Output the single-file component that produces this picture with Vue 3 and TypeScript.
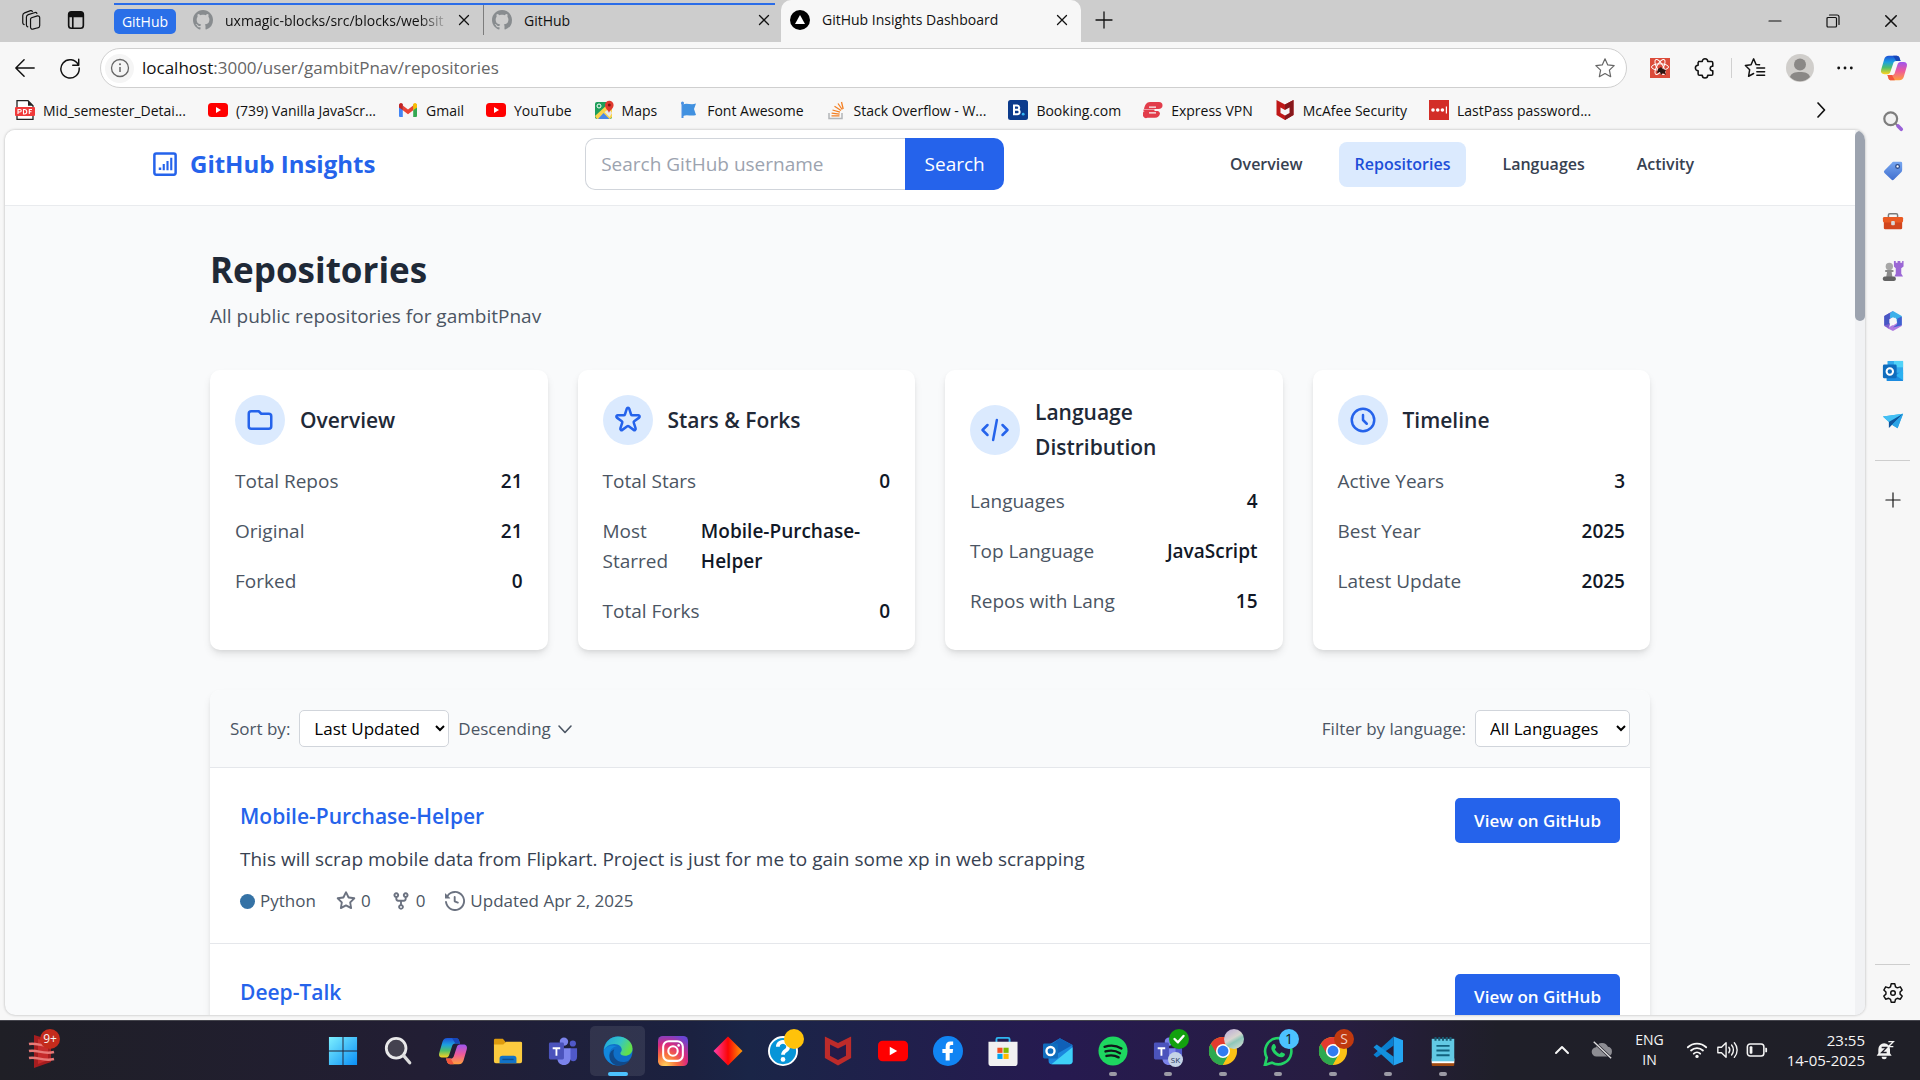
<script setup lang="ts">
import { ref } from 'vue'

interface Icon {
  box: string
  body: string
}

const stroke = (width: number, d: string): string =>
  `<path d="${d}" fill="none" stroke="currentColor" stroke-width="${width}" stroke-linecap="round" stroke-linejoin="round"/>`

const copilotBody = `
  <defs>
    <linearGradient id="cpA" x1="0" y1="0" x2="0" y2="1"><stop offset="0" stop-color="#1d50d8"/><stop offset=".35" stop-color="#1c9fe0"/><stop offset=".65" stop-color="#4fbf6a"/><stop offset="1" stop-color="#ffd21f"/></linearGradient>
    <linearGradient id="cpB" x1="0" y1="0" x2="0" y2="1"><stop offset="0" stop-color="#9c55f0"/><stop offset=".5" stop-color="#ee5a9b"/><stop offset="1" stop-color="#ffa03c"/></linearGradient>
  </defs>
  <path d="M10 2h9c2 0 3 1 3.500 3l1 3h-5c-2 0-3 1-3.500 3l-3 9c-.6 2-1.500 3-3.500 3H5c-3 0-4.500-2-3.700-5l3.500-12C5.600 3.500 7 2 10 2z" fill="url(#cpA)"/>
  <path d="M22 30h-9c-2 0-3-1-3.500-3l-1-3h5c2 0 3-1 3.500-3l3-9c.6-2 1.500-3 3.500-3H27c3 0 4.500 2 3.700 5l-3.500 12c-.8 2.500-2.200 4-5.200 4z" fill="url(#cpB)"/>
  <path d="M15 2h4c2 0 3 1 3.500 3l1 3h-5z" fill="#1746b8"/><path d="M17 30h-4c-2 0-3-1-3.500-3l-1-3h5z" fill="#f2553c"/>`

const chromeBody = `
  <circle cx="16" cy="16" r="15" fill="#fbc116"/>
  <path d="M16 16 3 8.500A15 15 0 0 1 29 8.500H16z" fill="#e33b2e"/>
  <path d="M3 8.500A15 15 0 0 0 15.500 31L22 19.500 16 16z" fill="#2da94f"/>
  <path d="M3 8.500 9.500 19.500 16 16V8.500z" fill="#e33b2e"/><path d="M3 8.500 9.500 19.700 16 23l6-3.500L15.500 31A15 15 0 0 1 3 8.500z" fill="#2da94f"/>
  <circle cx="16" cy="16" r="7.500" fill="#fff"/><circle cx="16" cy="16" r="5.800" fill="#2f7bf0"/>`

const teamsBody = `
  <circle cx="17" cy="6" r="4.500" fill="#7b83eb"/><circle cx="26.500" cy="8" r="3.300" fill="#5059c9"/>
  <path d="M23 13h8v9c0 3-2 5-4 5s-4-2-4-5z" fill="#5059c9"/>
  <path d="M10 13h14v11c0 4-3 7-7 7s-7-3-7-7z" fill="#7b83eb"/>
  <rect x="1" y="7" width="16" height="18" rx="1.500" fill="#4b53bc"/>
  <path d="M5 12h8v2H10v7H8v-7H5z" fill="#fff"/>`

const icons: Record<string, Icon> = {
  workspaces: { box: '0 0 24 24', body: stroke(1.3, 'M12.500 9.500 19 7.500a2 2 0 0 1 2.500 2V18a2.500 2.500 0 0 1-2 2.500L14 22a2 2 0 0 1-2.500-2v-9a2 2 0 0 1 1-1.500zM8.500 19.500A2 2 0 0 1 7 17.500V9a3 3 0 0 1 2-2.800l7.500-2.400a2 2 0 0 1 2 .9M4.500 17A2 2 0 0 1 3 15V7a3 3 0 0 1 2-2.800l6.500-2.400a2 2 0 0 1 2 .7') },
  tabActions: { box: '0 0 24 24', body: '<path d="M4 8V6a3 3 0 0 1 3-3h10a3 3 0 0 1 3 3v2z" fill="currentColor"/>' + stroke(1.8, 'M4 7V6a3 3 0 0 1 3-3h10a3 3 0 0 1 3 3v12a3 3 0 0 1-3 3H7a3 3 0 0 1-3-3zM4 8h16M8.500 8v13') },
  github: { box: '0 0 16 16', body: '<path fill="#888c8f" d="M8 0C3.580 0 0 3.580 0 8c0 3.540 2.290 6.530 5.470 7.590.4.070.55-.17.55-.38 0-.19-.01-.82-.01-1.490-2.010.37-2.530-.49-2.690-.94-.09-.23-.48-.94-.82-1.130-.28-.15-.68-.52-.01-.53.63-.01 1.080.58 1.230.82.72 1.210 1.870.87 2.330.66.07-.52.28-.87.51-1.070-1.780-.2-3.640-.89-3.640-3.950 0-.87.31-1.590.82-2.150-.08-.2-.36-1.020.08-2.120 0 0 .67-.21 2.200.82.64-.18 1.320-.27 2-.27s1.360.09 2 .27c1.530-1.040 2.200-.82 2.200-.82.44 1.100.16 1.920.08 2.120.51.56.82 1.270.82 2.150 0 3.070-1.870 3.750-3.650 3.950.29.25.54.73.54 1.480 0 1.070-.01 1.930-.01 2.200 0 .21.15.46.55.38A8.010 8.010 0 0 0 16 8c0-4.420-3.580-8-8-8z"/>' },
  vercel: { box: '0 0 20 20', body: '<circle cx="10" cy="10" r="10" fill="#000"/><path d="m10 5 5 9H5z" fill="#fff"/>' },
  close: { box: '0 0 12 12', body: stroke(1.3, 'M1.500 1.500l9 9M10.500 1.500l-9 9') },
  plus: { box: '0 0 18 18', body: stroke(1.3, 'M9 1v16M1 9h16') },
  minimize: { box: '0 0 14 14', body: stroke(1.2, 'M1 7h12') },
  restore: { box: '0 0 14 14', body: stroke(1.2, 'M1 4.500a1 1 0 0 1 1-1h7.500a1 1 0 0 1 1 1V12a1 1 0 0 1-1 1H2a1 1 0 0 1-1-1zM3.500 1H11a2 2 0 0 1 2 2v7.500') },
  back: { box: '0 0 24 24', body: stroke(1.6, 'M22 12H3M11 3l-9 9 9 9') },
  reload: { box: '0 0 24 24', body: stroke(1.6, 'M21 8.500A10 10 0 1 0 22 12M21.500 2.500v6.500H15') },
  info: { box: '0 0 20 20', body: '<circle cx="10" cy="10" r="8.500" fill="none" stroke="currentColor" stroke-width="1.300"/><path d="M10 9v5" stroke="currentColor" stroke-width="1.500"/><circle cx="10" cy="6.300" r="1" fill="currentColor"/>' },
  starThin: { box: '0 0 24 24', body: stroke(1.3, 'm12 2 3 6.600 7 .8-5.200 4.900 1.400 7.200L12 18l-6.200 3.500 1.400-7.200L2 9.400l7-.8z') },
  reactExt: { box: '0 0 20 20', body: '<rect width="20" height="20" fill="#dc4b3a"/><g fill="none" stroke="#fff" stroke-width="1"><ellipse cx="10" cy="9" rx="8.500" ry="3.200"/><ellipse cx="10" cy="9" rx="8.500" ry="3.200" transform="rotate(60 10 9)"/><ellipse cx="10" cy="9" rx="8.500" ry="3.200" transform="rotate(120 10 9)"/></g><path d="m8 11 3-2 2 2 3 1-1 2 1 3-3-2-2 2-1-3-3 1z" fill="#2b1512"/>' },
  puzzle: { box: '0 0 24 24', body: stroke(1.7, 'M5 5h4a3 3 0 0 1 6 0h4a1.500 1.500 0 0 1 1.500 1.500V10h-1a2.600 2.600 0 0 0 0 5h1v3.500A1.500 1.500 0 0 1 19 20h-4a3 3 0 0 1-6 0H6a1.500 1.500 0 0 1-1.500-1.500V15a3 3 0 0 1 0-6V6') },
  favorites: { box: '0 0 24 24', body: stroke(1.6, 'M17 8.500 13.200 8.300 10.500 2 7.700 8.500 1.500 9.200l4.700 4.600L5 21l5.500-3M14 12h8.500M14 16h8.500M14 20h8.500') },
  profile: { box: '0 0 28 28', body: '<circle cx="14" cy="14" r="14" fill="#d0cecb"/><circle cx="14" cy="10.500" r="6" fill="#8a8886"/><path d="M4 23c1-4 5-5 10-5s9 1 10 5a14 14 0 0 1-20 0z" fill="#8a8886"/>' },
  dots: { box: '0 0 20 20', body: '<g fill="currentColor"><circle cx="3" cy="10" r="1.600"/><circle cx="10" cy="10" r="1.600"/><circle cx="17" cy="10" r="1.600"/></g>' },
  copilot: { box: '0 0 32 32', body: copilotBody },
  pdf: { box: '0 0 20 20', body: '<path d="M2 .7h11l5 5V19.300H2z" fill="#fff" stroke="#222" stroke-width="1.300"/><path d="M13 .7v5h5" fill="#222"/><rect y="7" width="20" height="9" rx="1" fill="#f03a3a"/><path d="M3 14V9.500h2a1.200 1.200 0 0 1 0 2.500H3M8.500 9.500v4.500h1a2.200 2.200 0 0 0 0-4.500zM17 9.500h-2.700V14M14.300 11.800h2.200" fill="none" stroke="#fff" stroke-width="1.100"/>' },
  youtube: { box: '0 0 20 20', body: '<rect y="3" width="20" height="14" rx="3.500" fill="#f00"/><path d="M8 7v6l5-3z" fill="#fff"/>' },
  gmail: { box: '0 0 20 20', body: '<path d="M1 4.500h3.800V17H2a1 1 0 0 1-1-1z" fill="#4285f4"/><path d="M15.200 4.500H19V16a1 1 0 0 1-1 1h-2.800z" fill="#34a853"/><path d="M4.800 5.500 10 9.500l5.200-4v4.800L10 14.300l-5.200-4z" fill="#ea4335"/><path d="M1 5a2 2 0 0 1 3.200-1.500l.6.500v6.300L1 7.500z" fill="#c5221f"/><path d="M19 5a2 2 0 0 0-3.200-1.500l-.6.5v6.300L19 7.500z" fill="#fbbc04"/>' },
  maps: { box: '0 0 20 20', body: '<rect x="1" y="2" width="17" height="17" rx="2" fill="#1e9e5a"/><path d="M1 16 14 4l4 3v10l-2 2H3z" fill="#fbd34b"/><path d="m4 19 5.500-6 6 6z" fill="#4a86e8"/><path d="m10.500 12 5 5 2.500-4-3-4z" fill="#e8e8e8"/><circle cx="5" cy="6" r="2" fill="none" stroke="#fff" stroke-width="1"/><path d="M15 13c-.5-3-4-4-4-8a4.300 4.300 0 0 1 8.600 0c0 4-4 5-4.600 8z" fill="#e03a2f"/><circle cx="15.300" cy="5" r="1.500" fill="#7d1a14"/>' },
  flag: { box: '0 0 20 20', body: '<path d="M3.500 3v15" stroke="#4a90e2" stroke-width="2"/><circle cx="3.500" cy="3" r="1.500" fill="#4a90e2"/><path d="M4 4.500c4-2 8 1 13-1l-2 5.500 2 6c-5 1.500-9-1-13 1z" fill="#4191e0"/>' },
  stack: { box: '0 0 20 20', body: '<path d="M3 13v5.500h13V13" fill="none" stroke="#b2b5b8" stroke-width="1.500"/><path d="M5.500 15.800h8M5.600 13.200l8 .9M6.500 10l7.500 2.200M8.500 6.300l6.500 4.200M12 3.500l4.200 6M15.500 2l1.700 7" stroke="#f48024" stroke-width="1.300"/>' },
  booking: { box: '0 0 20 20', body: '<rect width="20" height="20" rx="2.500" fill="#0c3b8c"/><path d="M6 5.500v8.800h3.300a2.300 2.300 0 0 0 .7-4.500 2.300 2.300 0 0 0-.8-4.300zM6 9.700h3.500" fill="none" stroke="#fff" stroke-width="2"/><circle cx="15.200" cy="14.200" r="1.400" fill="#35b5f5"/>' },
  express: { box: '0 0 20 20', body: '<path d="M7 2h9a3.500 3.500 0 0 1 3.500 3.500c0 2-1.500 3.500-4 3.500H1c.8-4 2.500-7 6-7z" fill="#e23d4b"/><path d="M.5 9.500h11v1.800H.5z" fill="#e23d4b"/><path d="M2 11h13a3.200 3.200 0 0 1 2 2.500C16.500 16 15 17.800 12 17.800H4.500A3.500 3.500 0 0 1 2 11z" fill="#e23d4b"/><path d="M6 7.200h7M6 12.800h7" stroke="#f7f7f7" stroke-width="1.300"/>' },
  mcafee: { box: '0 0 20 20', body: '<path d="M1.500 0 10 4.500 18.500 0v15L10 20l-8.500-5z" fill="#c01818"/><path d="M10 4.500 18.500 0v15L10 20v-4.500l4.500-2.500V7.500L10 10z" fill="#86181c"/><path d="M5.500 7.500 10 10l4.500-2.500V13L10 15.500 5.500 13z" fill="#f7f7f7"/>' },
  lastpass: { box: '0 0 20 20', body: '<rect width="20" height="20" fill="#d32d27"/><g fill="#fff"><circle cx="4" cy="10" r="1.800"/><circle cx="8.700" cy="10" r="1.800"/><circle cx="13.400" cy="10" r="1.800"/><rect x="16.800" y="6.500" width="1.200" height="7"/></g>' },
  chevronRight: { box: '0 0 20 20', body: stroke(1.7, 'm7 3 6.500 7L7 17') },
  chevronDown: { box: '0 0 20 20', body: stroke(1.6, 'm4 7 6 6.500L16 7') },
  logo: { box: '0 0 24 24', body: '<rect x="3.500" y="3.500" width="17" height="17" rx="1.500" fill="none" stroke="currentColor" stroke-width="2"/><path d="M11 17V12M14 17V9.500M17 17V7" stroke="currentColor" stroke-width="1.700"/><rect x="7" y="14.800" width="2" height="2" fill="currentColor"/>' },
  folder: { box: '0 0 24 24', body: stroke(2, 'M3 7v10a2 2 0 002 2h14a2 2 0 002-2V9a2 2 0 00-2-2h-6l-2-2H5a2 2 0 00-2 2z') },
  star: { box: '0 0 24 24', body: stroke(2, 'M11.049 2.927c.3-.921 1.603-.921 1.902 0l1.519 4.674a1 1 0 00.95.69h4.915c.969 0 1.371 1.240.588 1.810l-3.976 2.888a1 1 0 00-.363 1.118l1.518 4.674c.3.922-.755 1.688-1.538 1.118l-3.976-2.888a1 1 0 00-1.176 0l-3.976 2.888c-.783.57-1.838-.197-1.538-1.118l1.518-4.674a1 1 0 00-.363-1.118l-3.976-2.888c-.784-.57-.38-1.810.588-1.810h4.914a1 1 0 00.951-.69l1.519-4.674z') },
  code: { box: '0 0 24 24', body: stroke(2, 'M10.500 20l3-16m4.500 4l4 4-4 4M6 16l-4-4 4-4') },
  clock: { box: '0 0 24 24', body: stroke(2, 'M12 8v4l3 3m6-3a9 9 0 11-18 0 9 9 0 0118 0z') },
  octStar: { box: '0 0 16 16', body: '<path fill="currentColor" d="M8 .25a.75.75 0 0 1 .673.418l1.882 3.815 4.210.612a.75.75 0 0 1 .416 1.279l-3.046 2.970.719 4.192a.751.751 0 0 1-1.088.791L8 12.347l-3.766 1.980a.75.75 0 0 1-1.088-.79l.72-4.194L.818 6.374a.75.75 0 0 1 .416-1.280l4.210-.611L7.327.668A.75.75 0 0 1 8 .25Zm0 2.445L6.615 5.500a.75.75 0 0 1-.564.41l-3.097.45 2.240 2.184a.75.75 0 0 1 .216.664l-.528 3.084 2.769-1.456a.75.75 0 0 1 .698 0l2.770 1.456-.53-3.084a.75.75 0 0 1 .216-.664l2.240-2.183-3.096-.45a.75.75 0 0 1-.564-.41L8 2.694Z"/>' },
  fork: { box: '0 0 16 16', body: '<path fill="currentColor" d="M5 5.372v.878c0 .414.336.75.75.75h4.500a.75.75 0 0 0 .75-.75v-.878a2.250 2.250 0 1 1 1.500 0v.878a2.250 2.250 0 0 1-2.250 2.250h-1.500v2.128a2.251 2.251 0 1 1-1.500 0V8.500h-1.500A2.250 2.250 0 0 1 3.500 6.250v-.878a2.250 2.250 0 1 1 1.500 0ZM5 3.250a.75.75 0 1 0-1.500 0 .75.75 0 0 0 1.500 0Zm6.750.75a.75.75 0 1 0 0-1.500.75.75 0 0 0 0 1.500Zm-3 8.750a.75.75 0 1 0-1.500 0 .75.75 0 0 0 1.500 0Z"/>' },
  history: { box: '0 0 16 16', body: '<path fill="currentColor" d="m.427 1.927 1.215 1.215a8.002 8.002 0 1 1-1.600 5.685.75.75 0 1 1 1.493-.154 6.500 6.500 0 1 0 1.180-4.458l1.358 1.358A.25.25 0 0 1 3.896 6H.25A.25.25 0 0 1 0 5.750V2.104a.25.25 0 0 1 .427-.177ZM7.750 4a.75.75 0 0 1 .75.75v2.992l2.028.812a.75.75 0 0 1-.557 1.392l-2.500-1A.751.751 0 0 1 7 8.250v-3.500A.75.75 0 0 1 7.750 4Z"/>' },
  sideSearch: { box: '0 0 24 24', body: '<circle cx="9.500" cy="9.500" r="7" fill="#f1f1f1" stroke="#7d7d7d" stroke-width="2.400"/><path d="m15 15 2.500 2.500" stroke="#7d7d7d" stroke-width="2"/><path d="m17.500 17.500 3.500 3.500" stroke="#9a62d8" stroke-width="4" stroke-linecap="round"/>' },
  sideTag: { box: '0 0 24 24', body: '<defs><linearGradient id="tg" x1="0" y1="0" x2="0" y2="1"><stop offset="0" stop-color="#76a6f0"/><stop offset="1" stop-color="#416fcf"/></linearGradient></defs><path d="M13 2h7.500A1.500 1.500 0 0 1 22 3.500V11c0 1-.3 1.600-1 2.300l-8 8a2 2 0 0 1-2.800 0l-7.500-7a2 2 0 0 1 0-2.800l8-8.300C11.400 2.300 12 2 13 2z" fill="url(#tg)"/><circle cx="17" cy="7" r="2" fill="#fff" stroke="#274789" stroke-width="1.400"/>' },
  sideTools: { box: '0 0 24 24', body: '<path d="M7 8V5.500A1.500 1.500 0 0 1 8.500 4h7A1.500 1.500 0 0 1 17 5.500V8" fill="none" stroke="#7a7a7a" stroke-width="1.600"/><rect x="2" y="12" width="20" height="9" rx="1.500" fill="#d2461d"/><rect x="1" y="7.500" width="22" height="6" rx="1.500" fill="#ea5a23"/><rect x="10" y="12" width="4" height="4.500" rx="1" fill="#d8d8d8"/>' },
  sideGames: { box: '0 0 24 24', body: '<path d="M13 1h2v2h2V1h3v2h2V1h1.500v6L21 9v6l2 3h-9.500l1.500-3V9l-2-2z" fill="#9b67d5"/><circle cx="8" cy="7" r="4" fill="#a7a7a7"/><path d="M3.500 11h9v2h-2l1 6h-7l1-6h-2z" fill="#8b8b8b"/><rect x="1" y="18" width="14" height="5" rx="2" fill="#636363"/>' },
  sideOffice: { box: '0 0 24 24', body: '<path d="M12 1 2.500 6.500v11l5 3z" fill="#7f5fd0"/><path d="m12 1 9.500 5.500v10L15 12V8.500L8.500 9 9 3z" fill="#3cb0ea"/><path d="M12 1 8.500 3.200V15l-6 2V6.500z" fill="#4757c4"/><path d="M21.500 8v9.500L12 23l-6-3.200 6-3.800 5-3z" fill="#b07be0"/><path d="m21.500 7-5 2.500v6L12 19l9.500-2.500z" fill="#3c62d0"/><path d="m12 8 4 2v4.500L12 17l-4-2.500V10z" fill="#f7f7f7"/>' },
  sideOutlook: { box: '0 0 24 24', body: '<path d="M6 1h16a1 1 0 0 1 1 1v13H6z" fill="#32a9ec"/><path d="M13 1h10v7H13z" fill="#51d3f8"/><path d="M5 14h18v8a1 1 0 0 1-1 1H6a1 1 0 0 1-1-1z" fill="#1b8be0"/><path d="m23 11-8 6 8 5z" fill="#2bb1f1"/><rect x="1" y="5" width="15" height="15" rx="1.500" fill="#0f6cbd"/><circle cx="8.500" cy="12.500" r="3.500" fill="none" stroke="#fff" stroke-width="2.200"/>' },
  sideDrop: { box: '0 0 24 24', body: '<path d="M1 7 23 4l-6 16-5-3z" fill="#29a7e8"/><path d="M1 7 23 4 7.500 13z" fill="#43c0f4"/><path d="M7.500 13 23 4 11 16l-3.500 3.500z" fill="#0f559c"/><path d="M11 16 23 4l-6 16z" fill="#2ba3e6"/>' },
  gear: { box: '0 0 24 24', body: stroke(1.6, 'M10 2h4l.7 3.200 2 1.200L20 5.300l2 3.500-2.300 2.200v2.200L22 15.300l-2 3.500-3.300-1-2 1.200L14 22h-4l-.7-3-2-1.200-3.300 1-2-3.500 2.300-2.100V11L2 8.800l2-3.500 3.300 1.100 2-1.200z') + '<circle cx="12" cy="12" r="2.500" fill="none" stroke="currentColor" stroke-width="1.600"/>' },
  widget: { box: '0 0 32 40', body: '<path d="M8 5l17 5v22L8 38z" fill="#a51d1f"/><path d="M12 9l10 3v18l-10 4z" fill="#c62b2b"/><path d="M3 14c8-2 14 4 25 1M3 21c8-2 14 4 25 1M3 28c8-2 14 4 25 1" fill="none" stroke="#e87a78" stroke-width="2.500"/>' },
  start: { box: '0 0 32 32', body: '<defs><linearGradient id="st" x1="0" y1="0" x2="1" y2="1"><stop offset="0" stop-color="#7df0ff"/><stop offset="1" stop-color="#0a8ef5"/></linearGradient></defs><path d="M1 1h14.500v14.500H1zM16.500 1H31v14.500H16.500zM1 16.500h14.500V31H1zM16.500 16.500H31V31H16.500z" fill="url(#st)"/>' },
  search: { box: '0 0 32 32', body: '<circle cx="14" cy="13" r="10.500" fill="#44424f" stroke="#e9e9ea" stroke-width="3"/><path d="m22 21 6.500 7.500" stroke="#dcdcdd" stroke-width="3.500" stroke-linecap="round"/>' },
  explorer: { box: '0 0 32 32', body: '<path d="M1 4.500A1.500 1.500 0 0 1 2.500 3h8l3 3.500V10H1z" fill="#dd9b0e"/><path d="M1 9h10l3-3h15.500A1.500 1.500 0 0 1 31 7.500V27a2 2 0 0 1-2 2H3a2 2 0 0 1-2-2z" fill="#fccb3f"/><path d="M7 29v-5a3 3 0 0 1 3-3h12a3 3 0 0 1 3 3v5z" fill="#1273c8"/><path d="M10 25h12" stroke="#0b4f92" stroke-width="1.500"/>' },
  teams: { box: '0 0 32 32', body: teamsBody },
  edge: { box: '0 0 32 32', body: '<defs><linearGradient id="eg" x1="0" y1="0" x2="1" y2=".4"><stop offset="0" stop-color="#1fa3df"/><stop offset=".6" stop-color="#35c6c4"/><stop offset="1" stop-color="#63e04b"/></linearGradient></defs><circle cx="16" cy="16" r="15.500" fill="#0f6fc8"/><path d="M1 15C2 6 8 .5 16 .5c9 0 15.500 6 15.500 13 0 5-4 7.500-8 7.500-3 0-5-1.200-5-2.500s1.500-1.500 1.500-4c0-3-3-6-8-6-5 0-9 3-11 6.500z" fill="url(#eg)"/><path d="M12 14c-3 7 2 15 12 13.500 2-.3 4-1.500 5-2.500-3 5-8 7-13 6.500C9 30.500 6 25 7 20c.6-3 2.500-5 5-6z" fill="#114a8b"/><path d="M1 15c3-5 10-6 14-4-5 .5-8.500 5-8.500 10 0 4 2 8 6 10A15.500 15.500 0 0 1 1 15z" fill="#1287dc"/>' },
  instagram: { box: '0 0 32 32', body: '<defs><radialGradient id="ig" cx=".25" cy="1" r="1.100"><stop offset="0" stop-color="#ffd45c"/><stop offset=".35" stop-color="#f8703d"/><stop offset=".65" stop-color="#dc2a7b"/><stop offset="1" stop-color="#6b45d3"/></radialGradient></defs><rect width="32" height="32" rx="5" fill="url(#ig)"/><rect x="5.500" y="5.500" width="21" height="21" rx="6" fill="none" stroke="#fff" stroke-width="2.200"/><circle cx="16" cy="16" r="5" fill="none" stroke="#fff" stroke-width="2.200"/><circle cx="22" cy="10" r="1.400" fill="#fff"/>' },
  diamond: { box: '0 0 32 32', body: '<defs><linearGradient id="dm"><stop offset="0" stop-color="#ff3fae"/><stop offset=".5" stop-color="#fb0505"/><stop offset="1" stop-color="#ff9c06"/></linearGradient></defs><path d="m16 .5 15.500 15.500L16 31.500.5 16z" fill="url(#dm)"/>' },
  help: { box: '0 0 32 32', body: '<circle cx="16" cy="16" r="15" fill="#0795d8" stroke="#fff" stroke-width="2"/><path d="M10.500 11.500a5.500 5 0 1 1 8.500 4c-2 1.300-3 2-3 4.500" fill="none" stroke="#fff" stroke-width="4"/><circle cx="16" cy="25" r="2.500" fill="#fff"/>' },
  mcafeeFlat: { box: '0 0 32 32', body: '<path d="M2 .5 16 7.500 30 .5v23L16 31.500 2 23.500z" fill="#bd2b2a"/><path d="m7.500 9 8.500 4.300L24.500 9v12L16 25.500 7.500 21z" fill="#241b49"/>' },
  youtubeBig: { box: '0 0 32 32', body: '<rect y="5" width="32" height="22" rx="5" fill="#f00"/><path d="M12.500 11.500v9l8-4.500z" fill="#fff"/>' },
  facebook: { box: '0 0 32 32', body: '<circle cx="16" cy="16" r="16" fill="#1184f3"/><path d="M13.500 26V18H10v-4.200h3.500V11c0-3.500 2-5.200 5-5.200h3v3.800h-2c-1.300 0-1.700.8-1.700 1.800v2.400h3.700l-.6 4.200h-3.100v8z" fill="#fff"/>' },
  store: { box: '0 0 32 32', body: '<path d="M9 7V3.500A1.500 1.500 0 0 1 10.500 2h11A1.500 1.500 0 0 1 23 3.500V7" fill="none" stroke="#2fb6f1" stroke-width="2"/><path d="M.5 6h31v23a3 3 0 0 1-3 3h-25a3 3 0 0 1-3-3z" fill="#f1f1f1"/><path d="M10 12.500h5.500V18H10z" fill="#f25022"/><path d="M16.500 12.500H22V18h-5.500z" fill="#7fba00"/><path d="M10 19h5.500v5.500H10z" fill="#00a4ef"/><path d="M16.500 19H22v5.500h-5.500z" fill="#ffb900"/>' },
  outlook: { box: '0 0 32 32', body: '<path d="M5 10 18 2.500 31.500 9.500V27a3 3 0 0 1-3 3H9a3 3 0 0 1-3-3z" fill="#1b86dd"/><path d="M18 2.500 31.500 9.500 15 19l-6-10z" fill="#1060b8"/><path d="M31.500 12v15a3 3 0 0 1-3 3H9z" fill="#3fd0f7"/><rect y="8" width="16" height="16" rx="1.500" fill="#0f6cbd"/><circle cx="8" cy="16" r="4.300" fill="none" stroke="#fff" stroke-width="2.500"/>' },
  spotify: { box: '0 0 32 32', body: '<circle cx="16" cy="16" r="15.500" fill="#1ed760"/><path d="M7 11.500c6-1.800 13-1.200 18 1.800M8 16.500c5-1.500 11-1 15.500 1.800M9 21.300c4.500-1.200 9-.8 13 1.500" fill="none" stroke="#11181a" stroke-width="2.500" stroke-linecap="round"/>' },
  chrome: { box: '0 0 32 32', body: chromeBody },
  whatsapp: { box: '0 0 32 32', body: '<path d="M2 31l2-8A14 14 0 1 1 9.500 28.500z" fill="none" stroke="#23d366" stroke-width="2.800"/><path d="M10.500 9c1-.8 2-.6 2.400.4l1 2.300c.3.800-.8 1.800-1.300 2.400 1.200 2.500 2.800 4 5.400 5 .6-.6 1.500-2 2.400-1.600l2.400 1.100c.9.5.8 1.500.1 2.400-2 2.300-4.500 2-7.500.5-3-1.500-5.500-4.500-6.300-7-.6-2 .2-4.500 1.400-5.500z" fill="#23d366"/>' },
  vscode: { box: '0 0 32 32', body: '<path d="m22 .5 10 4v23l-10 4z" fill="#25a5f2"/><path d="M22 .5.5 20l3.500 3L22 10z" fill="#0a7fd0"/><path d="M22 31.500.5 12 4 9l18 13z" fill="#1390dd"/>' },
  notepad: { box: '0 0 32 32', body: '<rect x="4" y="26" width="24" height="6" rx="1" fill="#a04a10"/><rect x="4" y="24" width="24" height="5" fill="#fff"/><rect x="4" y="3" width="24" height="24" fill="#62c9e4"/><path d="M9 10.500h14M9 15.500h14M9 20.500h14" stroke="#12617d" stroke-width="2"/><path d="M8 1v4M12 1v4M16 1v4M20 1v4M24 1v4" stroke="#185b72" stroke-width="2.200"/>' },
  chevronUp: { box: '0 0 16 16', body: stroke(2, 'm2 11 6-6 6 6') },
  cloud: { box: '0 0 24 24', body: '<path d="M6 19a5 5 0 0 1-.5-10 7 7 0 0 1 13-.5A5.300 5.300 0 0 1 18 19z" fill="#8d8d93"/><path d="m3 3 19 18" stroke="#201f2a" stroke-width="3"/><path d="m3 3 19 18" stroke="#e0e0e0" stroke-width="1.500"/>' },
  wifi: { box: '0 0 24 24', body: stroke(2, 'M2 9a14.500 14.500 0 0 1 20 0M5.500 12.500a9.500 9.500 0 0 1 13 0M8.500 16a5 5 0 0 1 7 0') + '<circle cx="12" cy="19" r="1.800" fill="currentColor"/>' },
  volume: { box: '0 0 24 24', body: stroke(1.5, 'M2 9h4l5-5v16l-5-5H2zM14 9a5 5 0 0 1 0 6M17 6.500a8.500 8.500 0 0 1 0 11M20 4a12 12 0 0 1 0 16') },
  battery: { box: '0 0 24 24', body: '<rect x="1.500" y="5.500" width="18" height="13" rx="3" fill="none" stroke="currentColor" stroke-width="1.700"/><rect x="4" y="8" width="3" height="8" rx="1" fill="currentColor"/><path d="M21 9.500h1a1 1 0 0 1 1 1v3a1 1 0 0 1-1 1h-1z" fill="currentColor"/>' },
  bell: { box: '0 0 24 24', body: '<path d="M11 4a7 7 0 0 0-7 7v5l-2 3h18l-2-3v-5a7 7 0 0 0-7-7z" fill="#f2f2f2"/><path d="M8 20h6a3 3 0 0 1-6 0z" fill="#f2f2f2"/><path d="M8 9h6l-6 6h6" fill="none" stroke="#1f1e28" stroke-width="1.600"/><path d="M16 2h6l-6 6h6" fill="none" stroke="#f2f2f2" stroke-width="1.600"/>' },
  check: { box: '0 0 12 12', body: '<path d="m3 6 2.300 2.200L9 4" fill="none" stroke="#fff" stroke-width="1.600" stroke-linecap="round" stroke-linejoin="round"/>' },
}

const bookmarks = [
  { icon: 'pdf', label: 'Mid_semester_Detai...' },
  { icon: 'youtube', label: '(739) Vanilla JavaScr...' },
  { icon: 'gmail', label: 'Gmail' },
  { icon: 'youtube', label: 'YouTube' },
  { icon: 'maps', label: 'Maps' },
  { icon: 'flag', label: 'Font Awesome' },
  { icon: 'stack', label: 'Stack Overflow - W...' },
  { icon: 'booking', label: 'Booking.com' },
  { icon: 'express', label: 'Express VPN' },
  { icon: 'mcafee', label: 'McAfee Security' },
  { icon: 'lastpass', label: 'LastPass password...' },
]

const sideApps = ['sideSearch', 'sideTag', 'sideTools', 'sideGames', 'sideOffice', 'sideOutlook', 'sideDrop']

const navLinks = ['Overview', 'Repositories', 'Languages', 'Activity']

const stats = [
  { icon: 'folder', title: 'Overview', rows: [['Total Repos', '21'], ['Original', '21'], ['Forked', '0']] },
  { icon: 'star', title: 'Stars & Forks', rows: [['Total Stars', '0'], ['Most Starred', 'Mobile-Purchase-Helper'], ['Total Forks', '0']] },
  { icon: 'code', title: 'Language Distribution', rows: [['Languages', '4'], ['Top Language', 'JavaScript'], ['Repos with Lang', '15']] },
  { icon: 'clock', title: 'Timeline', rows: [['Active Years', '3'], ['Best Year', '2025'], ['Latest Update', '2025']] },
]

const repos = [
  {
    name: 'Mobile-Purchase-Helper',
    description: 'This will scrap mobile data from Flipkart. Project is just for me to gain some xp in web scrapping',
    language: 'Python',
    stars: 0,
    forks: 0,
    updated: 'Apr 2, 2025',
  },
  { name: 'Deep-Talk', description: '', language: '', stars: 0, forks: 0, updated: '' },
]

interface TaskApp {
  icon: string
  active?: boolean
  open?: boolean
  badge?: string
  text?: string
}

const taskApps: TaskApp[] = [
  { icon: 'start' },
  { icon: 'search' },
  { icon: 'copilot' },
  { icon: 'explorer' },
  { icon: 'teams' },
  { icon: 'edge', active: true },
  { icon: 'instagram' },
  { icon: 'diamond' },
  { icon: 'help', badge: 'amber', text: '' },
  { icon: 'mcafeeFlat' },
  { icon: 'youtubeBig' },
  { icon: 'facebook' },
  { icon: 'store' },
  { icon: 'outlook' },
  { icon: 'spotify', open: true },
  { icon: 'teams', open: true, badge: 'green' },
  { icon: 'chrome', open: true, badge: 'photo', text: '' },
  { icon: 'whatsapp', open: true, badge: 'sky', text: '1' },
  { icon: 'chrome', open: true, badge: 'rust', text: 'S' },
  { icon: 'vscode', open: true },
  { icon: 'notepad', open: true },
]

const username = ref('')
const sortBy = ref('Last Updated')
const language = ref('All Languages')
</script>

<template>
  <div class="window">
    <header class="tabstrip">
      <button class="strip-btn" aria-label="Workspaces"><svg class="i22" :viewBox="icons.workspaces.box" v-html="icons.workspaces.body" /></button>
      <button class="strip-btn" aria-label="Tab actions"><svg class="i22" :viewBox="icons.tabActions.box" v-html="icons.tabActions.body" /></button>
      <div class="tab-group">
        <button class="group-chip">GitHub</button>
        <div class="tab first">
          <svg class="i20" :viewBox="icons.github.box" v-html="icons.github.body" />
          <span class="tab-title fade">uxmagic-blocks/src/blocks/websit</span>
          <button class="tab-close" aria-label="Close tab"><svg class="i12" :viewBox="icons.close.box" v-html="icons.close.body" /></button>
        </div>
        <div class="tab second">
          <svg class="i20" :viewBox="icons.github.box" v-html="icons.github.body" />
          <span class="tab-title">GitHub</span>
          <button class="tab-close" aria-label="Close tab"><svg class="i12" :viewBox="icons.close.box" v-html="icons.close.body" /></button>
        </div>
      </div>
      <div class="tab current">
        <svg class="i20" :viewBox="icons.vercel.box" v-html="icons.vercel.body" />
        <span class="tab-title">GitHub Insights Dashboard</span>
        <button class="tab-close" aria-label="Close tab"><svg class="i12" :viewBox="icons.close.box" v-html="icons.close.body" /></button>
      </div>
      <button class="strip-btn" aria-label="New tab"><svg class="i18" :viewBox="icons.plus.box" v-html="icons.plus.body" /></button>
      <div class="window-controls">
        <button aria-label="Minimize"><svg class="i14" :viewBox="icons.minimize.box" v-html="icons.minimize.body" /></button>
        <button aria-label="Restore"><svg class="i14" :viewBox="icons.restore.box" v-html="icons.restore.body" /></button>
        <button aria-label="Close"><svg class="i14" :viewBox="icons.close.box" v-html="icons.close.body" /></button>
      </div>
    </header>

    <div class="toolbar">
      <button class="tool" aria-label="Back"><svg class="i22" :viewBox="icons.back.box" v-html="icons.back.body" /></button>
      <button class="tool" aria-label="Refresh"><svg class="i22" :viewBox="icons.reload.box" v-html="icons.reload.body" /></button>
      <div class="address">
        <span class="site-info"><svg class="i20" :viewBox="icons.info.box" v-html="icons.info.body" /></span>
        <p class="url"><span class="host">localhost</span>:3000/user/gambitPnav/repositories</p>
        <svg class="i22" :viewBox="icons.starThin.box" v-html="icons.starThin.body" />
      </div>
      <div class="extensions">
        <button class="tool" aria-label="React Developer Tools"><svg class="i20" :viewBox="icons.reactExt.box" v-html="icons.reactExt.body" /></button>
        <button class="tool" aria-label="Extensions"><svg class="i22" :viewBox="icons.puzzle.box" v-html="icons.puzzle.body" /></button>
      </div>
      <button class="tool" aria-label="Favorites"><svg class="i22" :viewBox="icons.favorites.box" v-html="icons.favorites.body" /></button>
      <button class="tool" aria-label="Profile"><svg class="i28" :viewBox="icons.profile.box" v-html="icons.profile.body" /></button>
      <button class="tool" aria-label="Settings and more"><svg class="i18" :viewBox="icons.dots.box" v-html="icons.dots.body" /></button>
      <button class="tool copilot" aria-label="Copilot"><svg class="i28" :viewBox="icons.copilot.box" v-html="icons.copilot.body" /></button>
    </div>

    <div class="workarea">
      <div class="main-column">
        <nav class="bookmarks" aria-label="Favorites bar">
          <a v-for="(b, i) in bookmarks" :key="i" href="#" class="bookmark">
            <svg class="i20" :viewBox="icons[b.icon].box" v-html="icons[b.icon].body" />
            <span>{{ b.label }}</span>
          </a>
          <button class="more" aria-label="More favorites"><svg class="i20" :viewBox="icons.chevronRight.box" v-html="icons.chevronRight.body" /></button>
        </nav>

        <div class="viewport">
          <div class="page">
            <header class="site-header">
              <div class="site-header-inner">
                <a href="#" class="brand">
                  <svg class="i30" :viewBox="icons.logo.box" v-html="icons.logo.body" />
                  <span>GitHub Insights</span>
                </a>
                <form class="search" @submit.prevent>
                  <input v-model="username" type="text" placeholder="Search GitHub username" aria-label="Search GitHub username" />
                  <button type="submit">Search</button>
                </form>
                <nav class="site-nav">
                  <a v-for="n in navLinks" :key="n" href="#" :class="{ selected: n === 'Repositories' }">{{ n }}</a>
                </nav>
              </div>
            </header>

            <main class="content">
              <h1>Repositories</h1>
              <p class="lead">All public repositories for gambitPnav</p>

              <section class="stats">
                <article v-for="s in stats" :key="s.title" class="stat-card">
                  <div class="stat-head">
                    <span class="bubble"><svg class="i30" :viewBox="icons[s.icon].box" v-html="icons[s.icon].body" /></span>
                    <h2>{{ s.title }}</h2>
                  </div>
                  <dl>
                    <div v-for="row in s.rows" :key="row[0]">
                      <dt>{{ row[0] }}</dt>
                      <dd>{{ row[1] }}</dd>
                    </div>
                  </dl>
                </article>
              </section>

              <section class="repo-panel">
                <div class="filters">
                  <div class="filter-set">
                    <label for="sort">Sort by:</label>
                    <select id="sort" v-model="sortBy" class="sort-select">
                      <option>Last Updated</option>
                    </select>
                    <button class="order">
                      <span>Descending</span>
                      <svg class="i20" :viewBox="icons.chevronDown.box" v-html="icons.chevronDown.body" />
                    </button>
                  </div>
                  <div class="filter-set">
                    <label for="lang">Filter by language:</label>
                    <select id="lang" v-model="language" class="lang-select">
                      <option>All Languages</option>
                    </select>
                  </div>
                </div>
                <article v-for="r in repos" :key="r.name" class="repo">
                  <div class="repo-info">
                    <h3><a href="#">{{ r.name }}</a></h3>
                    <p v-if="r.description" class="description">{{ r.description }}</p>
                    <ul v-if="r.language" class="meta">
                      <li><i class="lang-dot"></i>{{ r.language }}</li>
                      <li><svg class="i20" :viewBox="icons.octStar.box" v-html="icons.octStar.body" />{{ r.stars }}</li>
                      <li><svg class="i20" :viewBox="icons.fork.box" v-html="icons.fork.body" />{{ r.forks }}</li>
                      <li><svg class="i20" :viewBox="icons.history.box" v-html="icons.history.body" />Updated {{ r.updated }}</li>
                    </ul>
                  </div>
                  <a href="#" class="view">View on GitHub</a>
                </article>
              </section>
            </main>
          </div>
          <div class="scrollbar"><div class="thumb"></div></div>
        </div>
      </div>

      <aside class="sidebar">
        <button v-for="s in sideApps" :key="s" class="side-btn" :aria-label="s"><svg class="i22" :viewBox="icons[s].box" v-html="icons[s].body" /></button>
        <hr />
        <button class="side-btn add" aria-label="Customize"><svg class="i16" :viewBox="icons.plus.box" v-html="icons.plus.body" /></button>
        <hr class="bottom-rule" />
        <button class="side-btn" aria-label="Settings"><svg class="i22" :viewBox="icons.gear.box" v-html="icons.gear.body" /></button>
      </aside>
    </div>

    <footer class="taskbar">
      <div class="widgets">
        <button class="widget" aria-label="Widgets">
          <svg class="widget-art" :viewBox="icons.widget.box" v-html="icons.widget.body" />
          <span class="badge red">9+</span>
        </button>
      </div>
      <div class="apps">
        <button v-for="(a, i) in taskApps" :key="i" class="app" :class="{ active: a.active, open: a.open }" :aria-label="a.icon">
          <svg class="i30" :viewBox="icons[a.icon].box" v-html="icons[a.icon].body" />
          <span v-if="a.badge" class="badge" :class="a.badge">
            <svg v-if="a.badge === 'green'" class="i18" :viewBox="icons.check.box" v-html="icons.check.body" />
            <template v-else>{{ a.text }}</template>
          </span>
          <span v-if="a.badge === 'green'" class="initials">SK</span>
        </button>
      </div>
      <div class="tray">
        <svg class="i16" :viewBox="icons.chevronUp.box" v-html="icons.chevronUp.body" />
        <svg class="i22" :viewBox="icons.cloud.box" v-html="icons.cloud.body" />
        <div class="locale"><span>ENG</span><span>IN</span></div>
        <div class="status">
          <svg class="i22" :viewBox="icons.wifi.box" v-html="icons.wifi.body" />
          <svg class="i22" :viewBox="icons.volume.box" v-html="icons.volume.body" />
          <svg class="i22" :viewBox="icons.battery.box" v-html="icons.battery.body" />
        </div>
        <div class="datetime"><span>23:55</span><span>14-05-2025</span></div>
        <svg class="i20" :viewBox="icons.bell.box" v-html="icons.bell.body" />
      </div>
    </footer>
  </div>
</template>

<style>
body {
  margin: 0;
  overflow: hidden;
}
</style>

<style scoped>
* {
  box-sizing: border-box;
}

.window {
  display: flex;
  flex-direction: column;
  height: 100vh;
  background: #f7f7f7;
  color: #111;
  font-family: "Open Sans", "Noto Sans", sans-serif;
  font-size: 14px;
}

svg {
  display: block;
  flex: none;
}

button {
  display: flex;
  align-items: center;
  justify-content: center;
  padding: 0;
  border: 0;
  background: none;
  color: inherit;
  font: inherit;
}

a {
  color: inherit;
  text-decoration: none;
}

h1, h2, h3, p, dl, dd, ul {
  margin: 0;
  padding: 0;
}

.i12 { width: 12px; height: 12px; }
.i14 { width: 14px; height: 14px; }
.i16 { width: 16px; height: 16px; }
.i18 { width: 18px; height: 18px; }
.i20 { width: 20px; height: 20px; }
.i22 { width: 22px; height: 22px; }
.i28 { width: 28px; height: 28px; }
.i30 { width: 30px; height: 30px; }

/* Tab strip */
.tabstrip {
  display: flex;
  flex: none;
  height: 42px;
  padding-left: 8px;
  background: #cdcdcd;
}

.strip-btn {
  width: 45px;
  height: 40px;
}

.tab-group {
  display: flex;
  align-items: center;
  width: 661px;
  height: 39px;
  margin: 3px 6px 0 16px;
  border-top: 2px solid #2a6ce8;
}

.group-chip {
  width: 62px;
  height: 25px;
  margin-bottom: 5px;
  border-radius: 5px;
  background: #2a6fe8;
  color: #fff;
}

.tab {
  display: flex;
  align-items: center;
  gap: 12px;
  height: 30px;
  margin-bottom: 7px;
  padding-left: 8px;
}

.tab.first {
  width: 308px;
  padding-left: 17px;
  border-right: 1px solid #7c7c7c;
}

.tab.second {
  flex: 1;
}

.tab-title {
  flex: 1;
  min-width: 0;
  overflow: hidden;
  white-space: nowrap;
}

.fade {
  mask-image: linear-gradient(to right, #000 86%, transparent);
}

.tab-close {
  width: 12px;
  margin-right: 5px;
}

.tab.first .tab-close {
  margin: 0 13px 0 -4px;
}

.tab.current {
  width: 300px;
  height: 42px;
  margin: 0;
  padding: 0 8px 3px 9px;
  border-radius: 10px 10px 0 0;
  background: #f7f7f7;
}

.window-controls {
  display: flex;
  margin-left: auto;
}

.window-controls button {
  width: 58px;
  height: 42px;
}

/* Toolbar */
.toolbar {
  display: flex;
  flex: none;
  align-items: center;
  height: 52px;
  padding-left: 2px;
}

.tool {
  width: 45px;
  height: 40px;
}

.address {
  display: flex;
  flex: 1;
  align-items: center;
  gap: 8px;
  height: 40px;
  margin: 0 10px 0 8px;
  padding: 0 10px 0 4px;
  border: 1px solid #cfcfcf;
  border-radius: 20px;
  background: #fff;
  color: #666;
}

.site-info {
  display: grid;
  place-items: center;
  width: 29px;
  height: 29px;
  border-radius: 50%;
  background: #f5f5f5;
}

.url {
  flex: 1;
  font-size: 17px;
  line-height: 24px;
}

.host {
  color: #111;
}

.extensions {
  display: flex;
  padding-right: 4px;
  border-right: 1px solid #d0d0d0;
}

.extensions .tool {
  height: 20px;
}

.toolbar .copilot {
  width: 53px;
}

/* Work area */
.workarea {
  display: flex;
  flex: 1;
  min-height: 0;
}

.main-column {
  display: flex;
  flex: 1;
  flex-direction: column;
  min-width: 0;
  padding: 0 0 5px 5px;
}

.bookmarks {
  display: flex;
  flex: none;
  align-items: center;
  gap: 22px;
  height: 36px;
  padding: 0 34px 4px 10px;
}

.bookmark {
  display: flex;
  align-items: center;
  gap: 8px;
  white-space: nowrap;
}

.more {
  margin-left: auto;
}

.viewport {
  display: flex;
  flex: 1;
  min-height: 0;
  overflow: hidden;
  border-radius: 10px;
  background: #f9fafb;
  box-shadow: 0 0 3px rgba(0, 0, 0, 0.28);
}

.page {
  flex: 1;
  min-width: 0;
  overflow: hidden;
  font-size: 19px;
  line-height: 30px;
}

.scrollbar {
  flex: none;
  width: 10px;
  padding-top: 1px;
  background: #f1f2f4;
}

.thumb {
  height: 190px;
  border-radius: 5px;
  background: #9ca3af;
}

/* Site header */
.site-header {
  border-bottom: 1px solid #e9ebee;
  background: #fff;
}

.site-header-inner {
  display: flex;
  align-items: center;
  justify-content: space-between;
  max-width: 1600px;
  margin: 0 auto;
  padding: 8px 20px 15px;
}

.brand {
  display: flex;
  align-items: center;
  gap: 10px;
  color: #2563eb;
  font-size: 24px;
  font-weight: 700;
}

.search {
  display: flex;
  height: 52px;
}

.search input {
  width: 320px;
  padding: 0 15px;
  border: 1px solid #d1d5db;
  border-right: 0;
  border-radius: 10px 0 0 10px;
  background: #fff;
  color: #111827;
  font: inherit;
}

.search input::placeholder {
  color: #9ca3af;
}

.search button {
  width: 99px;
  border-radius: 0 10px 10px 0;
  background: #2563eb;
  color: #fff;
}

.site-nav {
  display: flex;
  gap: 20px;
  color: #374151;
  font-size: 16px;
  font-weight: 600;
}

.site-nav a {
  padding: 10px 16px;
  border-radius: 8px;
  line-height: 25px;
}

.site-nav .selected {
  background: #dbeafe;
  color: #1d4ed8;
}

/* Content */
.content {
  max-width: 1480px;
  margin: 0 auto;
  padding: 40px 20px;
}

h1 {
  color: #1f2937;
  font-size: 35px;
  font-weight: 700;
  line-height: 48px;
}

.lead {
  margin: 7px 0 39px;
  color: #4b5563;
}

.stats {
  display: grid;
  grid-template-columns: repeat(4, 1fr);
  gap: 30px;
  margin-bottom: 40px;
}

.stat-card {
  padding: 25px 25px 24px;
  border-radius: 10px;
  background: #fff;
  box-shadow: 0 5px 8px -1px rgba(0, 0, 0, 0.1), 0 2px 5px -2px rgba(0, 0, 0, 0.1);
}

.stat-head {
  display: flex;
  align-items: center;
  gap: 15px;
  margin-bottom: 21px;
}

.bubble {
  display: grid;
  flex: none;
  place-items: center;
  width: 50px;
  height: 50px;
  border-radius: 50%;
  background: #dbeafe;
  color: #2563eb;
}

h2 {
  color: #1f2937;
  font-size: 21px;
  font-weight: 600;
  line-height: 35px;
}

dl {
  display: grid;
  gap: 20px;
}

dl div {
  display: flex;
  justify-content: space-between;
}

dt {
  color: #4b5563;
}

dd {
  color: #111827;
  font-weight: 600;
}

/* Repository list */
.repo-panel {
  border-radius: 10px;
  background: #fff;
  box-shadow: 0 5px 8px -1px rgba(0, 0, 0, 0.1), 0 2px 5px -2px rgba(0, 0, 0, 0.1);
}

.filters {
  display: flex;
  justify-content: space-between;
  padding: 20px;
  border-bottom: 1px solid #e5e7eb;
  border-radius: 10px 10px 0 0;
  background: #f9fafb;
  color: #4b5563;
  font-size: 17px;
}

.filter-set {
  display: flex;
  align-items: center;
  gap: 9px;
}

.filters select {
  height: 37px;
  padding: 0 0 0 10px;
  border: 1px solid #d1d5db;
  border-radius: 5px;
  background: #fff;
  color: #000;
  font: inherit;
}

.sort-select {
  width: 150px;
}

.lang-select {
  width: 155px;
}

.order {
  gap: 4px;
}

.repo {
  display: flex;
  align-items: flex-start;
  justify-content: space-between;
  min-height: 176px;
  padding: 30px 30px 27px;
  border-bottom: 1px solid #e5e7eb;
}

h3 {
  color: #2563eb;
  font-size: 21px;
  font-weight: 600;
  line-height: 36px;
}

.description {
  margin: 10px 0 12px;
  color: #374151;
}

.meta {
  display: flex;
  gap: 20px;
  color: #4b5563;
  font-size: 17px;
  list-style: none;
}

.meta li {
  display: flex;
  align-items: center;
  gap: 5px;
}

.meta svg {
  color: #6b7280;
}

.lang-dot {
  width: 15px;
  height: 15px;
  border-radius: 50%;
  background: #3572a5;
}

.view {
  padding: 10px 19px;
  border-radius: 5px;
  background: #2563eb;
  color: #fff;
  font-size: 17px;
  font-weight: 600;
  line-height: 25px;
}

/* Edge sidebar */
.sidebar {
  display: flex;
  flex: none;
  flex-direction: column;
  align-items: center;
  width: 55px;
  padding: 2px 0;
}

.side-btn {
  flex: none;
  width: 50px;
  height: 50px;
}

.sidebar hr {
  width: 35px;
  margin: 14px 0;
  border: 0;
  border-top: 1px solid #cecece;
}

.sidebar .bottom-rule {
  margin: auto 0 3px;
}

/* Taskbar */
.taskbar {
  display: flex;
  flex: none;
  height: 60px;
  border-top: 1px solid #45454d;
  background: linear-gradient(to right, #1f1f26, #221e34 22%, #1b2140 36%, #1a2547 39%, #261a50 55%, #271d40 70%, #1f1f29 78%, #1f1f27);
  color: #f5f5f5;
}

.widgets {
  flex: none;
  width: 315px;
  padding-left: 24px;
}

.widget {
  position: relative;
  width: 36px;
  height: 58px;
}

.widget-art {
  width: 32px;
  height: 40px;
}

.apps {
  display: flex;
  align-items: center;
}

.app {
  position: relative;
  width: 55px;
  height: 50px;
  border-radius: 5px;
}

.app.active {
  background: rgba(255, 255, 255, 0.09);
}

.app.open::after,
.app.active::after {
  position: absolute;
  bottom: 0;
  left: calc(50% - 4px);
  width: 8px;
  height: 4px;
  border-radius: 2px;
  background: #9b9aa5;
  content: "";
}

.app.active::after {
  left: calc(50% - 10px);
  width: 20px;
  background: #4cc2ff;
}

.badge {
  display: grid;
  position: absolute;
  top: 3px;
  right: 6px;
  place-items: center;
  width: 20px;
  height: 20px;
  border-radius: 50%;
  line-height: 20px;
}

.red {
  top: 8px;
  right: 0;
  background: #c42b1c;
  font-size: 12px;
}

.amber { background: #ffc20a; }
.green { background: #13a10e; }
.photo { background: linear-gradient(150deg, #b8a6d8, #d8d5cf 45%, #8ec7b9 60%, #e5e0da); }
.sky { background: #4cc2ff; color: #111; }
.rust { background: #c0390f; color: #f3cfc4; }

.initials {
  position: absolute;
  right: 12px;
  bottom: 9px;
  width: 15px;
  border-radius: 50%;
  background: #c5d3e6;
  color: #26385a;
  font-size: 8px;
  line-height: 15px;
}

.tray {
  display: flex;
  align-items: center;
  margin-left: auto;
  padding: 0 25px 2px 0;
}

.locale,
.datetime {
  display: flex;
  flex-direction: column;
  line-height: 20px;
}

.tray > svg + svg {
  margin-left: 21px;
}

.locale {
  align-items: center;
  margin: 0 22px;
}

.status {
  display: flex;
  gap: 8px;
  margin-right: 19px;
}

.datetime {
  align-items: flex-end;
  margin-right: 10px;
  font-size: 15px;
}
</style>
